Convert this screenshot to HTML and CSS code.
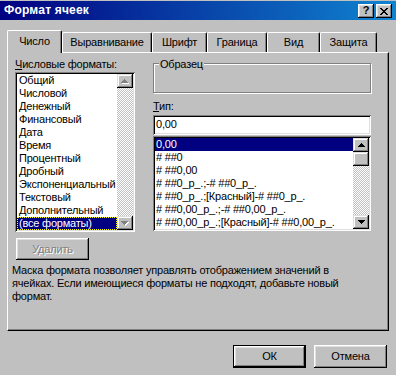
FILE: index.html
```html
<!DOCTYPE html>
<html lang="ru">
<head>
    <meta charset="UTF-8">
    <title>Формат ячеек</title>
    <link rel="stylesheet" href="styles.css">
</head>
<body>
<div class="window">
    <div class="titlebar">
        <span class="title">Формат ячеек</span>
        <div class="tb-buttons">
            <span class="tb-btn help">?</span>
            <span class="tb-btn close">
                <svg width="8" height="7" viewBox="0 0 8 7"><path d="M0 0h2v1H0zM6 0h2v1H6zM1 1h2v1H1zM5 1h2v1H5zM2 2h4v1H2zM3 3h2v1H3zM2 4h4v1H2zM1 5h2v1H1zM5 5h2v1H5zM0 6h2v1H0zM6 6h2v1H6z" fill="#000"/></svg>
            </span>
        </div>
    </div>

    <div class="tabs">
        <div class="tab active tab-num">Число</div>
        <div class="tab tab-align">Выравнивание</div>
        <div class="tab tab-font">Шрифт</div>
        <div class="tab tab-border">Граница</div>
        <div class="tab tab-view">Вид</div>
        <div class="tab tab-protect">Защита</div>
    </div>

    <div class="panel">
        <div class="columns">
            <div class="col-left">
                <div class="label"><u>Ч</u>исловые форматы:</div>
                <div class="listbox cat-list">
                    <ul class="items">
                        <li>Общий</li>
                        <li>Числовой</li>
                        <li>Денежный</li>
                        <li>Финансовый</li>
                        <li>Дата</li>
                        <li>Время</li>
                        <li>Процентный</li>
                        <li>Дробный</li>
                        <li>Экспоненциальный</li>
                        <li>Текстовый</li>
                        <li>Дополнительный</li>
                        <li class="selected focused">(все форматы)</li>
                    </ul>
                    <div class="scrollbar">
                        <div class="sb-btn">
                            <svg width="8" height="5" viewBox="0 0 8 5"><path d="M4 1h1v1H4zM3 2h3v1H3zM2 3h5v1H2zM1 4h7v1H1z" fill="#fff"/><path d="M3 0h1v1H3zM2 1h3v1H2zM1 2h5v1H1zM0 3h7v1H0z" fill="#808080"/></svg>
                        </div>
                        <div class="sb-track"></div>
                        <div class="sb-btn">
                            <svg width="8" height="5" viewBox="0 0 8 5"><path d="M1 1h7v1H1zM2 2h5v1H2zM3 3h3v1H3zM4 4h1v1H4z" fill="#fff"/><path d="M0 0h7v1H0zM1 1h5v1H1zM2 2h3v1H2zM3 3h1v1H3z" fill="#808080"/></svg>
                        </div>
                    </div>
                </div>
            </div>

            <div class="col-right">
                <div class="groupbox"><span class="legend">Образец</span></div>
                <div class="label type-label"><u>Т</u>ип:</div>
                <div class="textbox">0,00</div>
                <div class="listbox type-list">
                    <ul class="items">
                        <li class="selected">0,00</li>
                        <li># ##0</li>
                        <li># ##0,00</li>
                        <li># ##0_р_.;-# ##0_р_.</li>
                        <li># ##0_р_.;[Красный]-# ##0_р_.</li>
                        <li># ##0,00_р_.;-# ##0,00_р_.</li>
                        <li># ##0,00_р_.;[Красный]-# ##0,00_р_.</li>
                    </ul>
                    <div class="scrollbar">
                        <div class="sb-btn">
                            <svg width="7" height="4" viewBox="0 0 7 4"><path d="M3 0h1v1H3zM2 1h3v1H2zM1 2h5v1H1zM0 3h7v1H0z" fill="#000"/></svg>
                        </div>
                        <div class="sb-thumb"></div>
                        <div class="sb-track"></div>
                        <div class="sb-btn">
                            <svg width="7" height="4" viewBox="0 0 7 4"><path d="M0 0h7v1H0zM1 1h5v1H1zM2 2h3v1H2zM3 3h1v1H3z" fill="#000"/></svg>
                        </div>
                    </div>
                </div>
            </div>
        </div>

        <button class="btn disabled delete-btn">Удалить</button>
        <p class="hint">Маска формата позволяет управлять отображением значений в ячейках. Если имеющиеся форматы не подходят, добавьте новый формат.</p>
    </div>

    <div class="footer">
        <button class="btn default">ОК</button>
        <button class="btn">Отмена</button>
    </div>
</div>
</body>
</html>
```

FILE: styles.css
```css
*{
    box-sizing: border-box;
}
body{
    margin: 0;
    background-color: #c0c0c0;
    font: 11px/13px "Liberation Sans", Arial, sans-serif;
    letter-spacing: -0.2px;
    color: #000;
}
.window{
    width: 396px;
    height: 375px;
    padding-top: 1px;
    overflow: hidden;
}

/* title bar */
.titlebar{
    height: 19px;
    display: flex;
    justify-content: space-between;
    padding: 0 4px;
    background: linear-gradient(to right, #000080, #1084d0);
    color: #fff;
}
.title{
    font-weight: bold;
    font-size: 12px;
    line-height: 19px;
    letter-spacing: 0.2px;
}
.tb-buttons{
    display: flex;
    gap: 2px;
    margin-top: 3px;
}
.tb-btn{
    width: 16px;
    height: 14px;
    display: flex;
    align-items: center;
    justify-content: center;
    background-color: #c0c0c0;
    color: #000;
    box-shadow: inset -1px -1px #000, inset 1px 1px #fff, inset -2px -2px #808080, inset 2px 2px #dfdfdf;
}
.tb-btn.help{
    font-weight: bold;
    font-size: 11px;
    padding-bottom: 1px;
}

/* tabs */
.tabs{
    display: flex;
    align-items: flex-end;
    height: 22px;
    margin: 10px 0 0 7px;
}
.tab{
    height: 20px;
    padding-top: 3px;
    text-align: center;
    border-top: 1px solid #fff;
    border-left: 1px solid #fff;
    border-right: 1px solid #000;
    border-radius: 2px 2px 0 0;
    box-shadow: inset -1px 0 #808080;
}
.tab.active{
    position: relative;
    z-index: 1;
    height: 23px;
    margin-bottom: -1px;
    padding-top: 4px;
    background-color: #c0c0c0;
}
.tab-num{ width: 55px; }
.tab-align{ width: 90px; }
.tab-font{ width: 55px; }
.tab-border{ width: 60px; }
.tab-view{ width: 53px; }
.tab-protect{ width: 57px; }

/* tab page */
.panel{
    height: 279px;
    margin: 0 7px;
    padding: 5px 0 0 7px;
    border-top: 1px solid #fff;
    border-left: 1px solid #fff;
    border-right: 1px solid #000;
    border-bottom: 1px solid #000;
    box-shadow: inset -1px -1px #808080;
}
.columns{
    display: flex;
    gap: 18px;
}
.col-left{
    width: 120px;
}
.col-right{
    width: 218px;
    padding-top: 5px;
}
.label{
    height: 13px;
}

/* list boxes */
.listbox{
    display: flex;
    padding: 2px;
    background-color: #fff;
    box-shadow: inset 1px 1px #808080, inset -1px -1px #fff, inset 2px 2px #000, inset -2px -2px #dfdfdf;
}
.cat-list{
    height: 160px;
    margin-top: 1px;
}
.type-list{
    height: 95px;
    margin-top: 1px;
}
.items{
    flex: 1;
    min-width: 0;
    margin: 0;
    padding: 0;
    list-style: none;
}
.items li{
    height: 13px;
    padding-left: 2px;
    white-space: nowrap;
    overflow: hidden;
}
.type-list .items li{
    padding-left: 1px;
}
.items li.selected{
    background-color: #000080;
    color: #fff;
}
.items li.focused{
    outline: 1px dotted #ffff00;
    outline-offset: -1px;
}
.scrollbar{
    width: 16px;
    display: flex;
    flex-direction: column;
}
.sb-btn, .sb-thumb{
    height: 14px;
    flex-shrink: 0;
    display: flex;
    align-items: center;
    justify-content: center;
    background-color: #c0c0c0;
    box-shadow: inset -1px -1px #000, inset 1px 1px #dfdfdf, inset -2px -2px #808080, inset 2px 2px #fff;
}
.sb-track{
    flex: 1;
    background-image: conic-gradient(#fff 25%, #c0c0c0 0 50%, #fff 0 75%, #c0c0c0 0);
    background-size: 2px 2px;
}

/* right column */
.groupbox{
    height: 30px;
    padding-left: 5px;
    border: 1px solid #808080;
    box-shadow: inset 1px 1px #fff, 1px 1px #fff;
}
.legend{
    display: inline-block;
    margin-top: -6px;
    padding: 0 1px;
    vertical-align: top;
    background-color: #c0c0c0;
}
.type-label{
    margin-top: 7px;
}
.textbox{
    height: 20px;
    margin-top: 2px;
    padding: 3px 3px 0;
    background-color: #fff;
    box-shadow: inset 1px 1px #808080, inset -1px -1px #fff, inset 2px 2px #000, inset -2px -2px #dfdfdf;
}

/* buttons */
.btn{
    width: 73px;
    height: 23px;
    padding: 0;
    border: 0;
    font: inherit;
    letter-spacing: inherit;
    color: #000;
    background-color: #c0c0c0;
    box-shadow: inset -1px -1px #000, inset 1px 1px #fff, inset -2px -2px #808080, inset 2px 2px #dfdfdf;
}
.btn.default{
    border: 1px solid #000;
}
.btn.disabled{
    color: #808080;
    text-shadow: 1px 1px #fff;
}
.delete-btn{
    display: block;
    height: 22px;
    margin: 6px 0 0 1px;
}
.hint{
    margin: 4px 0 0 -3px;
    width: 350px;
}
.footer{
    display: flex;
    justify-content: flex-end;
    gap: 8px;
    padding: 14px 9px 0 0;
}
```
